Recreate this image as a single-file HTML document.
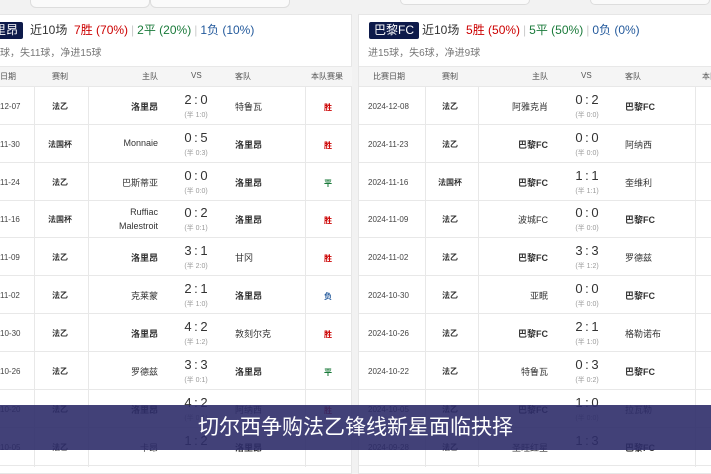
<!DOCTYPE html>
<html><head><meta charset="utf-8"><style>
*{margin:0;padding:0;box-sizing:border-box}
body{width:711px;height:450px;overflow:hidden;background:#f2f2f2;font-family:"Liberation Sans","Noto Sans CJK SC",sans-serif;color:#333;position:relative}
.p{position:absolute;top:14px;height:460px;background:#fff;border:1px solid #e6e6e6}
.tag{position:absolute;top:22px;height:17px;background:#0d1a4a;color:#fff;font-size:12px;line-height:17px;padding:0 5px;border-radius:2px}
.sum{position:absolute;top:22px;font-size:12px;line-height:17px;white-space:nowrap}
.r{color:#c00}.g{color:#1a7a3a}.b{color:#245a9c}.sep{color:#ccc;margin:0 3px}
.sub{position:absolute;top:44px;font-size:10px;color:#777;white-space:nowrap}
.hd{position:absolute;top:66px;height:21px;background:#f5f5f5;border-top:1px solid #e8e8e8;border-bottom:1px solid #e8e8e8}
.hd span{position:absolute;top:4px;font-size:8px;color:#555;white-space:nowrap}
.row{position:absolute;height:38px;border-bottom:1px solid #e8e8e8}
.row div{position:absolute;white-space:nowrap}
.d{font-size:8px;color:#444;top:15px}
.c{font-size:8px;font-weight:bold;top:14px}
.h{font-size:9px;font-weight:bold;top:13px;text-align:right}
.h2{font-size:9px;top:13px;text-align:right}
.s{font-size:13px;top:5px;text-align:center;width:40px;word-spacing:-1px}
.hf{font-size:7px;color:#999;top:23px;text-align:center;width:40px}
.a{font-size:9px;top:13px}
.ab{font-size:9px;font-weight:bold;top:13px}
.res{font-size:8px;top:15px;font-weight:bold}
.vl{position:absolute;top:87px;width:1px;height:380px;background:#e8e8e8}
.bar{position:absolute;left:0;top:405px;width:711px;height:45px;background:rgba(45,44,105,0.9);color:#fff;font-size:21px;text-align:center;line-height:45px}
</style></head><body>
<div style="position:absolute;left:30px;top:0;width:120px;height:8px;border:1px solid #ddd;border-top:none;border-radius:0 0 6px 6px;background:#fafafa"></div>
<div style="position:absolute;left:150px;top:0;width:140px;height:8px;border:1px solid #ddd;border-top:none;border-radius:0 0 6px 6px;background:#fafafa"></div>
<div style="position:absolute;left:400px;top:0;width:130px;height:5px;border:1px solid #ddd;border-top:none;border-radius:0 0 6px 6px;background:#fafafa"></div>
<div style="position:absolute;left:590px;top:0;width:120px;height:5px;border:1px solid #ddd;border-top:none;border-radius:0 0 6px 6px;background:#fafafa"></div>

<!-- LEFT -->
<div class="p" style="left:-2px;width:354px"></div>
<div class="tag" style="left:-11px">里昂</div>
<div class="sum" style="left:30px">近10场 <span class="r">&nbsp;7胜 (70%)</span><span class="sep">|</span><span class="g">2平 (20%)</span><span class="sep">|</span><span class="b">1负 (10%)</span></div>
<div class="sub" style="left:0">球，失11球，净进15球</div>
<div class="hd" style="left:0;width:352px"><span style="left:0">日期</span><span style="left:52px">赛制</span><span style="left:142px">主队</span><span style="left:191px">VS</span><span style="left:235px">客队</span><span style="left:311px">本队赛果</span></div>
<div class="vl" style="left:34px"></div><div class="vl" style="left:88px"></div><div class="vl" style="left:305px"></div>

<div class="row" style="left:0;width:352px;top:87px"><div class="d" style="left:0">12-07</div><div class="c" style="left:52px">法乙</div><div class="h" style="right:194px">洛里昂</div><div class="s" style="left:176px">2 : 0</div><div class="hf" style="left:176px">(半 1:0)</div><div class="a" style="left:235px">特鲁瓦</div><div class="res r" style="left:324px">胜</div></div>
<div class="row" style="left:0;width:352px;top:125px"><div class="d" style="left:0">11-30</div><div class="c" style="left:48px">法国杯</div><div class="h2" style="right:194px">Monnaie</div><div class="s" style="left:176px">0 : 5</div><div class="hf" style="left:176px">(半 0:3)</div><div class="ab" style="left:235px">洛里昂</div><div class="res r" style="left:324px">胜</div></div>
<div class="row" style="left:0;width:352px;top:163px"><div class="d" style="left:0">11-24</div><div class="c" style="left:52px">法乙</div><div class="h2" style="right:194px">巴斯蒂亚</div><div class="s" style="left:176px">0 : 0</div><div class="hf" style="left:176px">(半 0:0)</div><div class="ab" style="left:235px">洛里昂</div><div class="res g" style="left:324px">平</div></div>
<div class="row" style="left:0;width:352px;top:200px"><div class="d" style="left:0">11-16</div><div class="c" style="left:48px">法国杯</div><div class="h2" style="right:194px;top:5px;line-height:14px">Ruffiac<br>Malestroit</div><div class="s" style="left:176px">0 : 2</div><div class="hf" style="left:176px">(半 0:1)</div><div class="ab" style="left:235px">洛里昂</div><div class="res r" style="left:324px">胜</div></div>
<div class="row" style="left:0;width:352px;top:238px"><div class="d" style="left:0">11-09</div><div class="c" style="left:52px">法乙</div><div class="h" style="right:194px">洛里昂</div><div class="s" style="left:176px">3 : 1</div><div class="hf" style="left:176px">(半 2:0)</div><div class="a" style="left:235px">甘冈</div><div class="res r" style="left:324px">胜</div></div>
<div class="row" style="left:0;width:352px;top:276px"><div class="d" style="left:0">11-02</div><div class="c" style="left:52px">法乙</div><div class="h2" style="right:194px">克莱蒙</div><div class="s" style="left:176px">2 : 1</div><div class="hf" style="left:176px">(半 1:0)</div><div class="ab" style="left:235px">洛里昂</div><div class="res b" style="left:324px">负</div></div>
<div class="row" style="left:0;width:352px;top:314px"><div class="d" style="left:0">10-30</div><div class="c" style="left:52px">法乙</div><div class="h" style="right:194px">洛里昂</div><div class="s" style="left:176px">4 : 2</div><div class="hf" style="left:176px">(半 1:2)</div><div class="a" style="left:235px">敦刻尔克</div><div class="res r" style="left:324px">胜</div></div>
<div class="row" style="left:0;width:352px;top:352px"><div class="d" style="left:0">10-26</div><div class="c" style="left:52px">法乙</div><div class="h2" style="right:194px">罗德兹</div><div class="s" style="left:176px">3 : 3</div><div class="hf" style="left:176px">(半 0:1)</div><div class="ab" style="left:235px">洛里昂</div><div class="res g" style="left:324px">平</div></div>
<div class="row" style="left:0;width:352px;top:390px"><div class="d" style="left:0">10-20</div><div class="c" style="left:52px">法乙</div><div class="h" style="right:194px">洛里昂</div><div class="s" style="left:176px">4 : 2</div><div class="hf" style="left:176px">(半 0:1)</div><div class="a" style="left:235px">阿纳西</div><div class="res r" style="left:324px">胜</div></div>
<div class="row" style="left:0;width:352px;top:428px"><div class="d" style="left:0">10-05</div><div class="c" style="left:52px">法乙</div><div class="h2" style="right:194px">卡昂</div><div class="s" style="left:176px">1 : 2</div><div class="ab" style="left:235px">洛里昂</div></div>

<!-- RIGHT -->
<div class="p" style="left:358px;width:360px"></div>
<div class="tag" style="left:369px">巴黎FC</div>
<div class="sum" style="left:422px">近10场 <span class="r">&nbsp;5胜 (50%)</span><span class="sep">|</span><span class="g">5平 (50%)</span><span class="sep">|</span><span class="b">0负 (0%)</span></div>
<div class="sub" style="left:368px">进15球，失6球，净进9球</div>
<div class="hd" style="left:359px;width:352px"><span style="left:14px">比赛日期</span><span style="left:83px">赛制</span><span style="left:173px">主队</span><span style="left:222px">VS</span><span style="left:266px">客队</span><span style="left:343px">本队赛果</span></div>
<div class="vl" style="left:425px"></div><div class="vl" style="left:478px"></div><div class="vl" style="left:695px"></div>

<div class="row" style="left:359px;width:352px;top:87px"><div class="d" style="left:9px">2024-12-08</div><div class="c" style="left:83px">法乙</div><div class="h2" style="right:163px">阿雅克肖</div><div class="s" style="left:208px">0 : 2</div><div class="hf" style="left:208px">(半 0:0)</div><div class="ab" style="left:266px">巴黎FC</div></div>
<div class="row" style="left:359px;width:352px;top:125px"><div class="d" style="left:9px">2024-11-23</div><div class="c" style="left:83px">法乙</div><div class="h" style="right:163px">巴黎FC</div><div class="s" style="left:208px">0 : 0</div><div class="hf" style="left:208px">(半 0:0)</div><div class="a" style="left:266px">阿纳西</div></div>
<div class="row" style="left:359px;width:352px;top:163px"><div class="d" style="left:9px">2024-11-16</div><div class="c" style="left:79px">法国杯</div><div class="h" style="right:163px">巴黎FC</div><div class="s" style="left:208px">1 : 1</div><div class="hf" style="left:208px">(半 1:1)</div><div class="a" style="left:266px">奎维利</div></div>
<div class="row" style="left:359px;width:352px;top:200px"><div class="d" style="left:9px">2024-11-09</div><div class="c" style="left:83px">法乙</div><div class="h2" style="right:163px">波城FC</div><div class="s" style="left:208px">0 : 0</div><div class="hf" style="left:208px">(半 0:0)</div><div class="ab" style="left:266px">巴黎FC</div></div>
<div class="row" style="left:359px;width:352px;top:238px"><div class="d" style="left:9px">2024-11-02</div><div class="c" style="left:83px">法乙</div><div class="h" style="right:163px">巴黎FC</div><div class="s" style="left:208px">3 : 3</div><div class="hf" style="left:208px">(半 1:2)</div><div class="a" style="left:266px">罗德兹</div></div>
<div class="row" style="left:359px;width:352px;top:276px"><div class="d" style="left:9px">2024-10-30</div><div class="c" style="left:83px">法乙</div><div class="h2" style="right:163px">亚眠</div><div class="s" style="left:208px">0 : 0</div><div class="hf" style="left:208px">(半 0:0)</div><div class="ab" style="left:266px">巴黎FC</div></div>
<div class="row" style="left:359px;width:352px;top:314px"><div class="d" style="left:9px">2024-10-26</div><div class="c" style="left:83px">法乙</div><div class="h" style="right:163px">巴黎FC</div><div class="s" style="left:208px">2 : 1</div><div class="hf" style="left:208px">(半 1:0)</div><div class="a" style="left:266px">格勒诺布</div></div>
<div class="row" style="left:359px;width:352px;top:352px"><div class="d" style="left:9px">2024-10-22</div><div class="c" style="left:83px">法乙</div><div class="h2" style="right:163px">特鲁瓦</div><div class="s" style="left:208px">0 : 3</div><div class="hf" style="left:208px">(半 0:2)</div><div class="ab" style="left:266px">巴黎FC</div></div>
<div class="row" style="left:359px;width:352px;top:390px"><div class="d" style="left:9px">2024-10-05</div><div class="c" style="left:83px">法乙</div><div class="h" style="right:163px">巴黎FC</div><div class="s" style="left:208px">1 : 0</div><div class="hf" style="left:208px">(半 0:0)</div><div class="a" style="left:266px">拉瓦勒</div></div>
<div class="row" style="left:359px;width:352px;top:428px"><div class="d" style="left:9px">2024-09-28</div><div class="c" style="left:83px">法乙</div><div class="h2" style="right:163px">圣旺红星</div><div class="s" style="left:208px">1 : 3</div><div class="ab" style="left:266px">巴黎FC</div></div>

<div class="bar">切尔西争购法乙锋线新星面临抉择</div>
</body></html>
